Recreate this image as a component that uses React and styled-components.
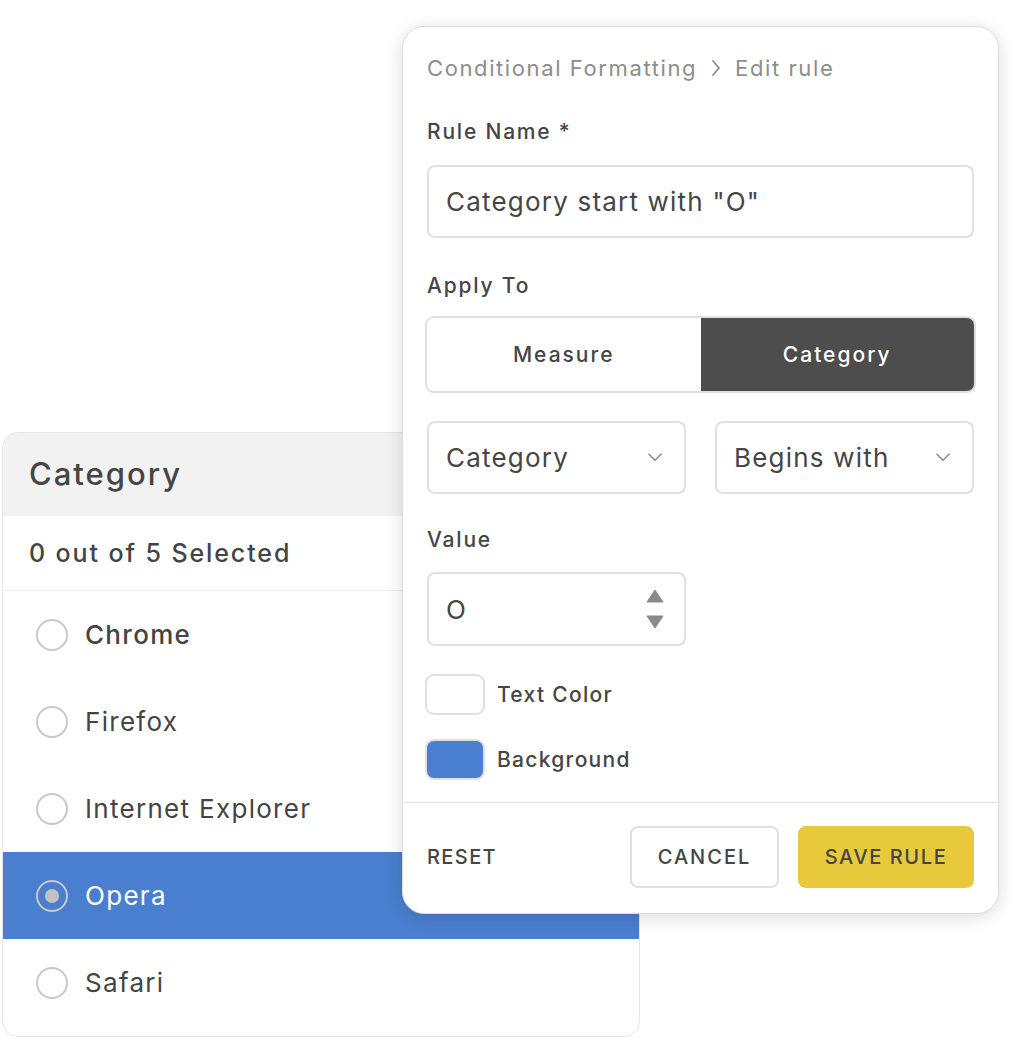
import React from "react";
import styled, { createGlobalStyle } from "styled-components";

const GlobalStyle = createGlobalStyle`
  html, body {
    margin: 0;
    padding: 0;
    background: #ffffff;
  }
  body {
    font-family: Inter, "Noto Sans", "Liberation Sans", sans-serif;
    color: #444444;
  }
  * {
    box-sizing: border-box;
  }
`;

const Scene = styled.div`
  position: relative;
  width: 1025px;
  height: 1039px;
  overflow: hidden;
`;

/* ---------- category list card ---------- */

const CategoryCard = styled.div`
  position: absolute;
  left: 2px;
  top: 432px;
  width: 638px;
  height: 605px;
  border: 1px solid #e6e6e6;
  border-radius: 16px;
  overflow: hidden;
  background: #fff;
  display: flex;
  flex-direction: column;
`;

const CardHeader = styled.div`
  height: 83px;
  background: #f2f2f2;
  display: flex;
  align-items: center;
  padding: 0 0 3px 26px;
  font-size: 31px;
  font-weight: 500;
  letter-spacing: 2px;
  color: #454545;
`;

const CountRow = styled.div`
  height: 75px;
  display: flex;
  align-items: center;
  padding-left: 26px;
  font-size: 25px;
  font-weight: 500;
  letter-spacing: 1.9px;
  color: #444;
  border-bottom: 1px solid #ebebeb;
`;

const Item = styled.div`
  height: 87px;
  display: flex;
  align-items: center;
  gap: 17px;
  padding-left: 33px;
  font-size: 26px;
  letter-spacing: 1.3px;
  font-weight: ${(p) => (p.$strong ? 500 : 400)};
  color: ${(p) => (p.$active ? "#ffffff" : "#444")};
  background: ${(p) => (p.$active ? "#4a7fcf" : "transparent")};
`;

const Radio = styled.span`
  width: 32px;
  height: 32px;
  border-radius: 50%;
  border: 2.5px solid #c8c8c8;
  display: flex;
  align-items: center;
  justify-content: center;
  flex-shrink: 0;
  &::after {
    content: "";
    width: 14px;
    height: 14px;
    border-radius: 50%;
    background: #c2c2c2;
    display: ${(p) => (p.$checked ? "block" : "none")};
  }
`;

/* ---------- edit rule modal ---------- */

const Modal = styled.div`
  position: absolute;
  left: 402px;
  top: 26px;
  width: 597px;
  height: 888px;
  background: #fff;
  border: 1px solid #dcdcdc;
  border-radius: 22px;
  box-shadow: 0 3px 18px rgba(0, 0, 0, 0.14);
  display: flex;
  flex-direction: column;
`;

const Body = styled.div`
  padding: 26px 24px 0;
  display: flex;
  flex-direction: column;
`;

const Breadcrumb = styled.div`
  height: 30px;
  display: flex;
  align-items: center;
  gap: 14px;
  font-size: 22px;
  letter-spacing: 1.6px;
  color: #8d8d8d;
`;

const Label = styled.div`
  height: 28px;
  line-height: 28px;
  margin-top: ${(p) => p.$mt}px;
  font-size: 21px;
  font-weight: 500;
  letter-spacing: 1.8px;
  color: #454545;
`;

const Field = styled.div`
  margin-top: ${(p) => p.$mt || 0}px;
  height: ${(p) => p.$h || 73}px;
  width: ${(p) => (p.$w ? `${p.$w}px` : "auto")};
  border: 2px solid #e0e0e0;
  border-radius: 8px;
  display: flex;
  align-items: center;
  justify-content: space-between;
  padding: 0 22px 0 17px;
  font-size: 26px;
  letter-spacing: 1.2px;
  color: #454545;
`;

const Toggle = styled.div`
  margin: 16px -2px 0;
  height: 77px;
  border: 2px solid #e0e0e0;
  border-radius: 9px;
  display: grid;
  grid-template-columns: 1fr 1fr;
  overflow: hidden;
`;

const ToggleOption = styled.div`
  display: flex;
  align-items: center;
  justify-content: center;
  font-size: 21px;
  font-weight: 500;
  letter-spacing: 2px;
  background: ${(p) => (p.$active ? "#4d4d4d" : "#fff")};
  color: ${(p) => (p.$active ? "#fff" : "#454545")};
`;

const SelectRow = styled.div`
  margin-top: 28px;
  display: grid;
  grid-template-columns: 1fr 1fr;
  gap: 29px;
`;

const Spinner = styled.div`
  display: flex;
  flex-direction: column;
  gap: 12px;
  margin-right: -2px;
`;

const SwatchRow = styled.div`
  margin: ${(p) => p.$mt}px 0 0 -2px;
  display: flex;
  align-items: center;
  gap: 12px;
  font-size: 21px;
  font-weight: 500;
  letter-spacing: 1.3px;
  color: #454545;
`;

const Swatch = styled.span`
  width: 60px;
  height: 41px;
  border-radius: 9px;
  border: 2px solid #e0e0e0;
  background: ${(p) => p.$color};
`;

const Footer = styled.div`
  margin-top: 22px;
  border-top: 1px solid #e3e3e3;
  padding: 23px 24px 0;
  display: flex;
  align-items: center;
  gap: 19px;
`;

const Button = styled.button`
  height: 62px;
  width: ${(p) => p.$w}px;
  border-radius: 8px;
  border: 2px solid ${(p) => (p.$primary ? "#e8c93b" : p.$plain ? "transparent" : "#e0e0e0")};
  background: ${(p) => (p.$primary ? "#e8c93b" : "#fff")};
  font-family: inherit;
  font-size: 20px;
  font-weight: 500;
  letter-spacing: ${(p) => (p.$plain ? "1.4px" : p.$primary ? "1.6px" : "2px")};
  color: #454545;
  text-transform: uppercase;
  padding: 0;
  text-align: ${(p) => (p.$plain ? "left" : "center")};
  margin: ${(p) => (p.$plain ? "0 auto 0 -2px" : "0")};
`;

const Chevron = ({ size = 14 }) => (
  <svg width={size} height={size * 0.6} viewBox="0 0 14 8" fill="none">
    <path d="M1 1l6 6 6-6" stroke="#8a8a8a" strokeWidth="1.5" strokeLinecap="round" strokeLinejoin="round" />
  </svg>
);

const Crumb = () => (
  <svg width="10" height="18" viewBox="0 0 10 18" fill="none">
    <path d="M2 2l6 7-6 7" stroke="#8d8d8d" strokeWidth="1.8" strokeLinecap="round" strokeLinejoin="round" />
  </svg>
);

const Triangle = ({ down }) => (
  <svg width="18" height="14" viewBox="0 0 18 14">
    <path d={down ? "M1 1h16L9 13z" : "M9 1l8 12H1z"} fill="#8a8a8a" strokeLinejoin="round" stroke="#8a8a8a" strokeWidth="1" />
  </svg>
);

const browsers = ["Chrome", "Firefox", "Internet Explorer", "Opera", "Safari"];

export default function App() {
  return (
    <>
      <GlobalStyle />
      <Scene>
        <CategoryCard>
          <CardHeader>Category</CardHeader>
          <CountRow>0 out of 5 Selected</CountRow>
          {browsers.map((b, i) => (
            <Item key={b} $active={b === "Opera"} $strong={i === 0}>
              <Radio $checked={b === "Opera"} />
              {b}
            </Item>
          ))}
        </CategoryCard>

        <Modal>
          <Body>
            <Breadcrumb>
              Conditional Formatting <Crumb /> Edit rule
            </Breadcrumb>
            <Label $mt={35}>Rule Name *</Label>
            <Field $mt={19}>Category start with "O"</Field>
            <Label $mt={34}>Apply To</Label>
            <Toggle>
              <ToggleOption>Measure</ToggleOption>
              <ToggleOption $active>Category</ToggleOption>
            </Toggle>
            <SelectRow>
              <Field>
                Category <Chevron />
              </Field>
              <Field>
                Begins with <Chevron />
              </Field>
            </SelectRow>
            <Label $mt={32}>Value</Label>
            <Field $mt={18} $h={74} $w={259}>
              O
              <Spinner>
                <Triangle />
                <Triangle down />
              </Spinner>
            </Field>
            <SwatchRow $mt={28}>
              <Swatch $color="#ffffff" />
              Text Color
            </SwatchRow>
            <SwatchRow $mt={24}>
              <Swatch $color="#4a7fd1" />
              Background
            </SwatchRow>
          </Body>
          <Footer>
            <Button $plain $w={120}>Reset</Button>
            <Button $w={149}>Cancel</Button>
            <Button $primary $w={176}>Save Rule</Button>
          </Footer>
        </Modal>
      </Scene>
    </>
  );
}
